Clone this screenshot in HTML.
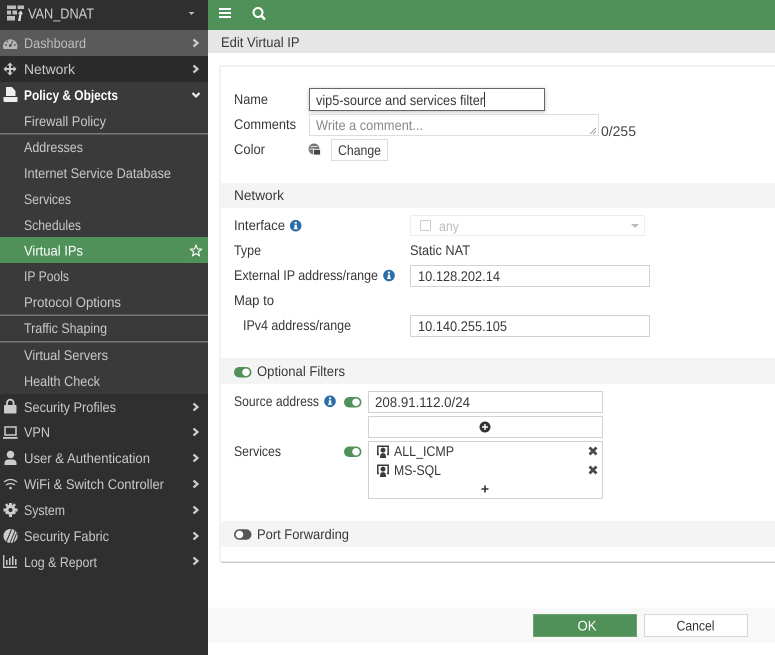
<!DOCTYPE html>
<html><head><meta charset="utf-8"><style>
html,body{margin:0;padding:0;background:#fff;width:775px;height:655px;overflow:hidden}
svg{display:block;filter:blur(.25px)}
text{font-family:"Liberation Sans",sans-serif;font-size:14px}
.s text{fill:#c9c9c9}
.m text{fill:#383838}
</style></head><body>
<svg width="775" height="655" viewBox="0 0 775 655" xmlns="http://www.w3.org/2000/svg" text-rendering="geometricPrecision">
<defs>
<g id="chev"><path d="M-2.5 -3.500L1.500 0L-2.500 3.500" fill="none" stroke="#ccc" stroke-width="2.200"/></g>
<g id="info"><circle r="5.800" fill="#2a6da8"/><rect x="-1.200" y="-1" width="2.400" height="4.200" fill="#fff"/><rect x="-2" y="2.400" width="4" height="1.100" fill="#fff"/><rect x="-1.100" y="-3.800" width="2.200" height="1.800" fill="#fff"/></g>
<g id="tog"><rect x="0" y="0" width="17.500" height="10.500" rx="5.250" fill="#4f9158"/><circle cx="12" cy="5.250" r="3.800" fill="#fff"/></g>
<g id="svc"><path d="M2 9H.8V.8H11.200V9H10" fill="none" stroke="#3a3a3a" stroke-width="1.500"/><circle cx="6" cy="4.600" r="2.500" fill="#3a3a3a"/><path d="M2.800 12.500L3.600 8.500Q6 6.800 8.400 8.500L9.200 12.500Z" fill="#3a3a3a"/></g>
<g id="x"><path d="M-3.500 -3.500L3.500 3.500M3.500 -3.500L-3.500 3.500" stroke="#4a4a4a" stroke-width="2.800"/></g>
</defs>

<!-- sidebar -->
<rect x="0" y="0" width="208" height="655" fill="#2f2f2f"/>
<rect x="0" y="30" width="208" height="26" fill="#5a5a5a"/>
<rect x="0" y="56" width="208" height="26" fill="#2b2b2b"/>
<rect x="0" y="82" width="208" height="312" fill="#3a3a3a"/>
<rect x="0" y="237" width="208" height="26" fill="#4f9158"/>
<rect x="0" y="133" width="208" height="1.500" fill="#777"/>
<rect x="0" y="314.500" width="208" height="1.500" fill="#777"/>
<rect x="0" y="341" width="208" height="1.500" fill="#777"/>

<g class="s">
<text x="28" y="18.500" textLength="66" lengthAdjust="spacingAndGlyphs" style="font-size:14.500px;fill:#d0d0d0">VAN_DNAT</text>
<text x="24" y="48" textLength="62" lengthAdjust="spacingAndGlyphs" style="fill:#bdbdbd">Dashboard</text>
<text x="24" y="74" textLength="51" lengthAdjust="spacingAndGlyphs">Network</text>
<text x="24" y="100" textLength="94" lengthAdjust="spacingAndGlyphs" style="fill:#fff;font-weight:bold">Policy &amp; Objects</text>
<text x="24" y="126" textLength="82" lengthAdjust="spacingAndGlyphs">Firewall Policy</text>
<text x="24" y="152" textLength="59" lengthAdjust="spacingAndGlyphs">Addresses</text>
<text x="24" y="178" textLength="147" lengthAdjust="spacingAndGlyphs">Internet Service Database</text>
<text x="24" y="204" textLength="47" lengthAdjust="spacingAndGlyphs">Services</text>
<text x="24" y="230" textLength="57" lengthAdjust="spacingAndGlyphs">Schedules</text>
<text x="24" y="255.500" textLength="59" lengthAdjust="spacingAndGlyphs" style="fill:#fff">Virtual IPs</text>
<text x="24" y="281" textLength="45" lengthAdjust="spacingAndGlyphs">IP Pools</text>
<text x="24" y="307" textLength="97" lengthAdjust="spacingAndGlyphs">Protocol Options</text>
<text x="24" y="333" textLength="83" lengthAdjust="spacingAndGlyphs">Traffic Shaping</text>
<text x="24" y="360" textLength="84" lengthAdjust="spacingAndGlyphs">Virtual Servers</text>
<text x="24" y="386" textLength="76" lengthAdjust="spacingAndGlyphs">Health Check</text>
<text x="24" y="412" textLength="92" lengthAdjust="spacingAndGlyphs">Security Profiles</text>
<text x="24" y="437" textLength="26" lengthAdjust="spacingAndGlyphs">VPN</text>
<text x="24" y="463" textLength="126" lengthAdjust="spacingAndGlyphs">User &amp; Authentication</text>
<text x="24" y="489" textLength="140" lengthAdjust="spacingAndGlyphs">WiFi &amp; Switch Controller</text>
<text x="24" y="515" textLength="41" lengthAdjust="spacingAndGlyphs">System</text>
<text x="24" y="541" textLength="85" lengthAdjust="spacingAndGlyphs">Security Fabric</text>
<text x="24" y="567" textLength="73" lengthAdjust="spacingAndGlyphs">Log &amp; Report</text>
</g>

<!-- chevrons -->
<use href="#chev" x="196" y="43"/><use href="#chev" x="196" y="69"/>
<path d="M192.500 93L196 96.500L199.500 93" fill="none" stroke="#eee" stroke-width="2.200"/>
<use href="#chev" x="196" y="407"/><use href="#chev" x="196" y="432"/><use href="#chev" x="196" y="458"/><use href="#chev" x="196" y="484"/><use href="#chev" x="196" y="510"/><use href="#chev" x="196" y="536"/><use href="#chev" x="196" y="561"/>
<path d="M188.500 12L194.500 12L191.500 15Z" fill="#bbb"/>
<path d="M196 245.200L197.500 248.900L201.500 249.200L198.400 251.800L199.400 255.700L196 253.600L192.600 255.700L193.600 251.800L190.500 249.200L194.500 248.900Z" fill="none" stroke="#fff" stroke-width="1.100"/>

<!-- sidebar icons -->
<g fill="#ccc">
<!-- firewall bricks -->
<path d="M7 5.500h9v3.500H7zM17.500 5.500h6.500v3.500h-6.500zM7 10.500h4v4H7zM12.500 10.500h4.500v4h-4.500zM7 16h8v4.500H7z" fill="#bdbdbd"/>
<path d="M18 21l1.500-7.500-2 .5 3.500-3.500 2 4-1.500-.5-1 7z" fill="#e0e0e0"/>
<!-- dashboard -->
<path d="M3.500 49.500a7.200 7.200 0 1 1 13.500 0z" fill="#b8b8b8" transform="translate(0,-.5)"/>
<circle cx="10.300" cy="45.500" r="1.500" fill="#5a5a5a"/><path d="M10.300 45.500L13 40.800" stroke="#5a5a5a" stroke-width="1.200"/>
<circle cx="6" cy="45" r="1" fill="#5a5a5a"/><circle cx="7.500" cy="41.500" r="1" fill="#5a5a5a"/><circle cx="14.800" cy="45" r="1" fill="#5a5a5a"/>
<!-- network -->
<path d="M10 62.500l3 3h-2v2.500h2.500v-2l3 3-3 3v-2H11v2.500h2l-3 3-3-3h2V70H6.500v2l-3-3 3-3v2H9v-2.500H7z"/>
<!-- policy -->
<path d="M6 87h6l3.500 4v5H6z" fill="#eee"/>
<path d="M3.500 97h14v4a1 1 0 0 1-1 1h-12a1 1 0 0 1-1-1z" fill="#eee"/>
<!-- lock -->
<rect x="4" y="405" width="12.500" height="8.500" rx="1"/><path d="M7 405v-2a3.300 3.300 0 0 1 6.600 0v2" fill="none" stroke="#ccc" stroke-width="1.800"/>
<!-- vpn -->
<path d="M5 427h11v8H5z" fill="none" stroke="#ccc" stroke-width="1.500"/><rect x="3" y="437" width="14.500" height="1.800"/>
<!-- user -->
<circle cx="10.500" cy="454.500" r="3.800"/><path d="M4.500 465v-2.500a4 4 0 0 1 4-3h4a4 4 0 0 1 4 3V465z"/>
<!-- wifi -->
<path d="M4 482q6.500-5 13 0M6 485q4.500-3 9 0" fill="none" stroke="#ccc" stroke-width="1.300"/><circle cx="10.500" cy="488" r="1.300"/>
<!-- gear -->
<circle cx="10.500" cy="510" r="5"/><path d="M9 503h3v14H9zM3.500 508.500h14v3h-14zM5 505l1.800-1.800 9.200 9.600-1.800 1.800zM16 505l-1.800-1.800-9.200 9.600 1.800 1.800z"/><circle cx="10.500" cy="510" r="2" fill="#2f2f2f"/>
<!-- fabric -->
<circle cx="10.500" cy="536" r="7"/><path d="M10 543l5-12.500M13 542.500l3.500-9M6.500 541.500l5-12" stroke="#2f2f2f" stroke-width="1" fill="none"/>
<!-- log -->
<path d="M3.700 555v12.300h13.300" fill="none" stroke="#ccc" stroke-width="1.300"/><path d="M6 560h1.500v5H6zM9 558h1.500v7H9zM12 556h1.500v9H12zM15 559h1.500v6H15z"/>
</g>

<!-- top bar -->
<rect x="208" y="0" width="567" height="30" fill="#4f9158"/>
<rect x="219" y="8" width="12" height="2" fill="#fff"/><rect x="219" y="12" width="12" height="2" fill="#fff"/><rect x="219" y="16" width="12" height="2" fill="#fff"/>
<circle cx="258" cy="12.500" r="4.500" fill="none" stroke="#fff" stroke-width="2"/><path d="M261 15.500L265 19.500" stroke="#fff" stroke-width="2.400"/>

<!-- title bar -->
<rect x="208" y="30" width="567" height="23" fill="#e6e6e6"/>
<g class="m">
<text x="221" y="47" textLength="78.500" lengthAdjust="spacingAndGlyphs">Edit Virtual IP</text>
</g>

<!-- panel -->
<rect x="220" y="66" width="560" height="496" fill="#fff" stroke="#e6e6e6"/>
<rect x="221" y="561.500" width="554" height="1.500" fill="#cfcfcf"/>
<rect x="221" y="183" width="554" height="25" fill="#f4f4f4"/>
<rect x="221" y="358" width="554" height="26" fill="#f4f4f4"/>
<rect x="221" y="521" width="554" height="26" fill="#f4f4f4"/>

<!-- footer -->
<rect x="208" y="607.500" width="567" height="35" fill="#f8f8f8"/>
<rect x="533.500" y="614.500" width="103" height="22" fill="#4f9158" stroke="#6aa472"/>
<rect x="644.500" y="614.500" width="103" height="22" fill="#fff" stroke="#d8d8d8"/>
<text x="577.500" y="630.500" textLength="19" lengthAdjust="spacingAndGlyphs" fill="#fff">OK</text>
<text x="676.500" y="630.500" textLength="38" lengthAdjust="spacingAndGlyphs" fill="#333">Cancel</text>

<!-- form controls -->
<rect x="309.500" y="88.500" width="235" height="22" fill="#fff" stroke="#666" style="filter:drop-shadow(0 1px 2px rgba(0,0,0,.25))"/>
<rect x="309.500" y="114.500" width="289" height="21" fill="#fff" stroke="#ddd"/>
<path d="M590 134l6-6M593 134l3-3" stroke="#888" stroke-width=".8"/>
<rect x="331.500" y="139.500" width="56" height="21" fill="#fff" stroke="#ddd"/>
<circle cx="314" cy="149" r="5.500" fill="#777"/><path d="M310.500 146.500h7M309.500 149h5" stroke="#fff" stroke-width=".8"/><rect x="313.500" y="149.500" width="7" height="5.500" fill="#444" stroke="#fff" stroke-width=".8"/>
<rect x="410.500" y="215.500" width="234" height="20" fill="#fff" stroke="#eee"/>
<rect x="420.500" y="220.500" width="10" height="10" rx="1" fill="#fff" stroke="#ccc"/>
<path d="M631 224h8l-4 4z" fill="#bbb"/>
<rect x="410.500" y="265.500" width="239" height="21" fill="#fff" stroke="#d2d2d2"/>
<rect x="410.500" y="315.500" width="239" height="21" fill="#fff" stroke="#d2d2d2"/>
<rect x="368.500" y="391.500" width="234" height="21" fill="#fff" stroke="#d2d2d2"/>
<rect x="368.500" y="416.500" width="234" height="21" fill="#fff" stroke="#d2d2d2"/>
<rect x="368.500" y="441.500" width="234" height="57" fill="#fff" stroke="#d2d2d2"/>
<circle cx="485" cy="427" r="5.500" fill="#333"/><path d="M482 427h6M485 424v6" stroke="#fff" stroke-width="1.500"/>
<path d="M481.500 489h7M485 485.500v7" stroke="#333" stroke-width="1.600"/>
<use href="#svc" x="377" y="445.500"/><use href="#svc" x="377" y="464.500"/>
<use href="#x" x="593" y="451"/><use href="#x" x="593" y="470"/>
<use href="#info" x="295.700" y="225.700"/><use href="#info" x="389" y="275.500"/><use href="#info" x="330" y="401.300"/>
<use href="#tog" x="344" y="397"/><use href="#tog" x="344" y="446.500"/><use href="#tog" x="234" y="367"/>
<rect x="234" y="529.300" width="17.500" height="10.500" rx="5.250" fill="#555"/><circle cx="239.500" cy="534.500" r="3.800" fill="#fff"/>
<rect x="484" y="92" width="1" height="15" fill="#333"/>

<g class="m">
<text x="234" y="104" textLength="34" lengthAdjust="spacingAndGlyphs">Name</text>
<text x="234" y="129" textLength="62" lengthAdjust="spacingAndGlyphs">Comments</text>
<text x="234" y="154" textLength="31" lengthAdjust="spacingAndGlyphs">Color</text>
<text x="316" y="105" textLength="168" lengthAdjust="spacingAndGlyphs">vip5-source and services filter</text>
<text x="316" y="130" textLength="107" lengthAdjust="spacingAndGlyphs" style="fill:#888">Write a comment...</text>
<text x="601" y="136" textLength="35" lengthAdjust="spacingAndGlyphs" style="fill:#444">0/255</text>
<text x="338" y="155" textLength="43" lengthAdjust="spacingAndGlyphs">Change</text>
<text x="234" y="200" textLength="50" lengthAdjust="spacingAndGlyphs">Network</text>
<text x="234" y="230" textLength="51" lengthAdjust="spacingAndGlyphs">Interface</text>
<text x="439" y="231" textLength="20" lengthAdjust="spacingAndGlyphs" style="fill:#bbb">any</text>
<text x="234" y="255" textLength="27" lengthAdjust="spacingAndGlyphs">Type</text>
<text x="410" y="255" textLength="60" lengthAdjust="spacingAndGlyphs">Static NAT</text>
<text x="234" y="280" textLength="144" lengthAdjust="spacingAndGlyphs">External IP address/range</text>
<text x="418" y="281" textLength="82" lengthAdjust="spacingAndGlyphs">10.128.202.14</text>
<text x="234" y="305" textLength="40" lengthAdjust="spacingAndGlyphs">Map to</text>
<text x="243" y="330" textLength="108" lengthAdjust="spacingAndGlyphs">IPv4 address/range</text>
<text x="418" y="331" textLength="89" lengthAdjust="spacingAndGlyphs">10.140.255.105</text>
<text x="257" y="376" textLength="88" lengthAdjust="spacingAndGlyphs">Optional Filters</text>
<text x="234" y="406" textLength="85" lengthAdjust="spacingAndGlyphs">Source address</text>
<text x="375" y="407" textLength="95" lengthAdjust="spacingAndGlyphs">208.91.112.0/24</text>
<text x="234" y="456" textLength="47" lengthAdjust="spacingAndGlyphs">Services</text>
<text x="394" y="456" textLength="60" lengthAdjust="spacingAndGlyphs">ALL_ICMP</text>
<text x="394" y="475" textLength="47" lengthAdjust="spacingAndGlyphs">MS-SQL</text>
<text x="257" y="539" textLength="92" lengthAdjust="spacingAndGlyphs">Port Forwarding</text>
</g>
</svg>
</body></html>
